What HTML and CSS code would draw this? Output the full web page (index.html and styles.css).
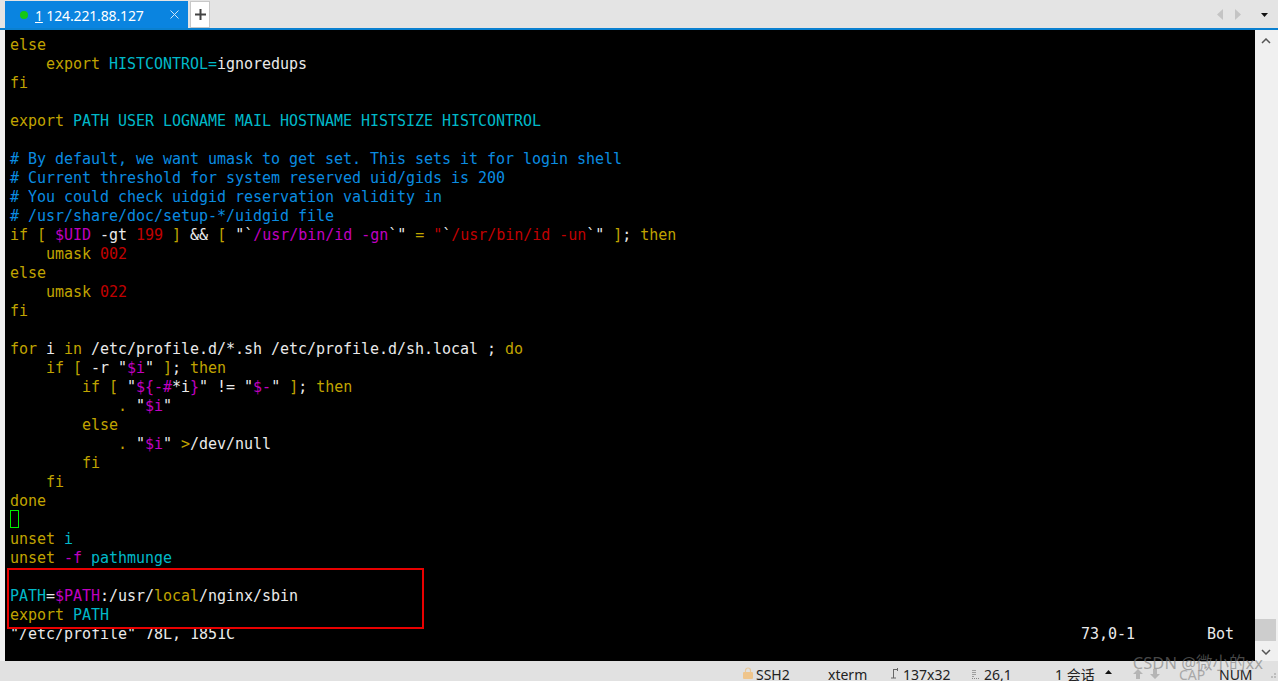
FILE: index.html
```html
<!DOCTYPE html>
<html lang="zh">
<head>
<meta charset="utf-8">
<title>124.221.88.127</title>
<link rel="stylesheet" href="styles.css">
</head>
<body>
<div class="app">
  <header class="tabbar">
    <div class="tab">
      <span class="dot"></span>
      <span class="tab-title"><u>1</u> 124.221.88.127</span>
      <svg class="tab-close" width="9" height="9" viewBox="0 0 9 9"><path d="M.5.5l8 8M8.500.5l-8 8" stroke="#cfe6f7" fill="none"/></svg>
    </div>
    <div class="tab-add"><svg width="11" height="11" viewBox="0 0 11 11"><path d="M5.500 0v11M0 5.500h11" stroke="#444" stroke-width="2" fill="none"/></svg></div>
    <div class="tab-nav">
      <svg width="6" height="11" viewBox="0 0 6 11"><path d="M6 0v11L0 5.500z" fill="#c4c4c4"/></svg>
      <svg width="6" height="11" viewBox="0 0 6 11"><path d="M0 0v11l6-5.500z" fill="#c4c4c4"/></svg>
      <svg class="nav-menu" width="7" height="4" viewBox="0 0 7 4"><path d="M0 0h7L3.500 4z" fill="#111"/></svg>
    </div>
  </header>
  <main class="body">
    <pre class="term"><span class="y">else</span>
    <span class="y">export</span> <span class="c">HISTCONTROL=</span>ignoredups
<span class="y">fi</span>

<span class="y">export</span> <span class="c">PATH USER LOGNAME MAIL HOSTNAME HISTSIZE HISTCONTROL</span>

<span class="b"># By default, we want umask to get set. This sets it for login shell</span>
<span class="b"># Current threshold for system reserved uid/gids is 200</span>
<span class="b"># You could check uidgid reservation validity in</span>
<span class="b"># /usr/share/doc/setup-*/uidgid file</span>
<span class="y">if [</span> <span class="m">$UID</span> -gt <span class="r">199</span> <span class="y">]</span> &amp;&amp; <span class="y">[</span> "`<span class="m">/usr/bin/id -gn</span>`" <span class="y">=</span> <span class="r">"</span>`<span class="r">/usr/bin/id -un</span>`" <span class="y">]</span>; <span class="y">then</span>
    <span class="y">umask</span> <span class="r">002</span>
<span class="y">else</span>
    <span class="y">umask</span> <span class="r">022</span>
<span class="y">fi</span>

<span class="y">for</span> i <span class="y">in</span> /etc/profile.d/*.sh /etc/profile.d/sh.local ; <span class="y">do</span>
    <span class="y">if [</span> -r "<span class="m">$i</span>" <span class="y">]</span>; <span class="y">then</span>
        <span class="y">if [</span> "<span class="m">${-#</span>*i<span class="m">}</span>" != "<span class="m">$-</span>" <span class="y">]</span>; <span class="y">then</span>
            <span class="y">.</span> "<span class="m">$i</span>"
        <span class="y">else</span>
            <span class="y">.</span> "<span class="m">$i</span>" <span class="y">&gt;</span>/dev/null
        <span class="y">fi</span>
    <span class="y">fi</span>
<span class="y">done</span>
<span class="cursor"> </span>
<span class="y">unset</span> <span class="c">i</span>
<span class="y">unset</span> <span class="m">-f</span> <span class="c">pathmunge</span>

<span class="c">PATH</span>=<span class="m">$PATH</span>:/usr/<span class="y">local</span>/nginx/sbin
<span class="y">export</span> <span class="c">PATH</span>
"/etc/profile" 78L, 1851C                                                                                              73,0-1        Bot</pre>
    <div class="scrollbar">
      <svg class="sb-up" width="10" height="6" viewBox="0 0 10 6"><path d="M1 5l4-4 4 4" stroke="#555" stroke-width="1.500" fill="none"/></svg>
      <div class="sb-track"><div class="sb-thumb"></div></div>
      <svg class="sb-down" width="10" height="6" viewBox="0 0 10 6"><path d="M1 1l4 4 4-4" stroke="#555" stroke-width="1.500" fill="none"/></svg>
    </div>
    <div class="redbox"></div>
  </main>
  <footer class="status">
    <span class="st st-ssh"><svg width="10" height="12" viewBox="0 0 10 12"><path d="M2.500 5V3.500a2.500 2.500 0 0 1 5 0V5" stroke="#e8c89a" stroke-width="1.200" fill="none"/><rect y="5" width="10" height="7" rx="1" fill="#efc58c"/></svg>SSH2</span>
    <span class="st st-xterm">xterm</span>
    <span class="st st-size"><svg width="8" height="11" viewBox="0 0 8 11"><path d="M3.500 1v9M1 10h5M3.500 1.500H8M7.500 0v3" stroke="#666" fill="none"/></svg>137x32</span>
    <span class="st st-pos"><svg width="8" height="9" viewBox="0 0 8 9"><path d="M1 0v8M3 0v6" stroke="#888" stroke-width="1.500" fill="none" stroke-dasharray="1 1"/><path d="M0 8.500h8" stroke="#888" fill="none" stroke-dasharray="1 1"/></svg>26,1</span>
    <span class="st st-sess">1 会话</span>
    <svg class="st-caret" width="7" height="4" viewBox="0 0 7 4"><path d="M3.500 0L7 4H0z" fill="#111"/></svg>
    <span class="st-arrows">
      <svg width="10" height="10" viewBox="0 0 10 10"><path d="M5 0l5 5H7v5H3V5H0z" fill="#b5b5b5"/></svg>
      <svg width="10" height="10" viewBox="0 0 10 10"><path d="M5 10l5-5H7V0H3v5H0z" fill="#b5b5b5"/></svg>
    </span>
    <span class="st st-cap">CAP</span>
    <span class="st st-num">NUM</span>
    <svg class="grip" width="8" height="8" viewBox="0 0 8 8"><path d="M5 1h2v2H5zM2 4h2v2H2zM5 4h2v2H5z" fill="#bdbdbd"/></svg>
  </footer>
  <div class="watermark">CSDN @微小的xx</div>
</div>
</body>
</html>
```
FILE: styles.css
```css
* { box-sizing: border-box; }
html, body { margin: 0; height: 100%; overflow: hidden; }
body { background: #e1e1e1; font-family: "Noto Sans", "Noto Sans CJK SC", sans-serif; }
.app { position: relative; width: 1278px; height: 681px; display: flex; flex-direction: column; overflow: hidden; }

.tabbar { height: 30px; flex: none; display: flex; align-items: flex-start; background: #e4e4e4; border-bottom: 2px solid #0a80d0; padding: 1px 0 0 5px; }
.tab { width: 183px; height: 27px; background: #0a84e0; display: flex; align-items: center; padding: 1px 0 0 15px; color: #fff; font-size: 14px; letter-spacing: -0.15px; }
.dot { width: 8px; height: 8px; border-radius: 50%; background: #14c814; margin-right: 7px; }
.tab-title { flex: 1; }
.tab-close { margin-right: 9px; margin-top: -1px; }
.tab-add { width: 20px; height: 27px; margin-left: 2px; background: #fff; border: 1px solid #c8c8c8; display: flex; align-items: center; justify-content: center; }
.tab-nav { margin-left: auto; height: 27px; display: flex; align-items: center; gap: 12px; padding-right: 10px; }
.nav-menu { margin-left: 8px; }

.body { position: relative; flex: 1; display: flex; padding-left: 5px; background: #f0f0f0; min-height: 0; }
.term { flex: 1; margin: 0; padding: 6px 0 0 5px; background: #000; color: #eaeaea; font-family: "DejaVu Sans Mono", monospace; font-size: 15px; line-height: 19px; letter-spacing: -0.03px; overflow: hidden; }
.y { color: #c0a400; }
.c { color: #00b8c8; }
.b { color: #0a8ce0; }
.m { color: #c000c0; }
.r { color: #c00000; }
.cursor { display: inline-block; width: 9px; height: 18px; margin-top: -1px; vertical-align: top; border: 1px solid #00f000; }

.scrollbar { width: 23px; flex: none; display: flex; flex-direction: column; align-items: center; background: #f0f0f0; padding: 8px 2px 6px 0; }
.sb-track { flex: 1; width: 100%; display: flex; align-items: flex-end; padding-bottom: 8px; }
.sb-thumb { width: 100%; height: 22px; background: #cdcdcd; }
.redbox { position: absolute; left: 7px; top: 538px; width: 417px; height: 61px; border: 2px solid #e80000; }

.status { height: 20px; flex: none; position: relative; display: flex; align-items: flex-end; background: #e1e1e1; font-size: 14px; color: #222; line-height: 16px; padding-left: 743px; }
.st { display: inline-flex; align-items: flex-end; white-space: nowrap; margin-bottom: -2px; }
.st svg { margin-right: 3px; margin-bottom: 4px; }
.st-ssh { width: 85px; }
.st-xterm { width: 62px; }
.st-size { width: 82px; }
.st-size svg { margin-right: 5px; }
.st-pos { width: 83px; }
.st-pos svg { margin-right: 4px; }
.st-sess { width: 50px; }
.st-caret { margin: 0 0 7px 0; }
.st-arrows { display: inline-flex; gap: 7px; margin: 0 0 2px 21px; }
.st-cap { color: #a8a8a8; margin-left: 19px; width: 40px; }
.st-num { color: #222; }
.grip { position: absolute; right: 1px; bottom: 1px; }
.watermark { position: absolute; right: 15px; top: 650px; font-size: 16.5px; color: rgba(120,120,120,.6); white-space: nowrap; }
```
